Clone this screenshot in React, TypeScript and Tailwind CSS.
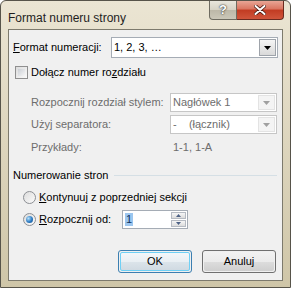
import React from 'react';

const font = { fontFamily: '"Liberation Sans", Arial, sans-serif' };

function Arrow({ disabled }: { disabled?: boolean }) {
  return (
    <svg width="7" height="4" viewBox="0 0 7 4">
      <path d="M0 0h7L3.5 4z" fill={disabled ? '#a0a0a0' : '#000'} />
    </svg>
  );
}

function Select({
  value,
  width,
  height,
  disabled,
}: {
  value: string;
  width: string;
  height: string;
  disabled?: boolean;
}) {
  return (
    <div
      className={`${width} ${height} flex items-stretch border ${
        disabled ? 'border-[#c6c6c6] text-[#6d6d6d]' : 'border-[#a5acb5] text-black'
      } bg-white`}
    >
      <div className="flex-1 flex items-center pl-[2px] whitespace-pre">{value}</div>
      <div
        className={`w-[17px] m-[1px] flex items-center justify-center border ${
          disabled
            ? 'border-[#e3e3e3] bg-[#f4f4f4]'
            : 'border-[#9ea3aa] bg-gradient-to-b from-[#f5f5f5] to-[#d9d9d9]'
        }`}
      >
        <Arrow disabled={disabled} />
      </div>
    </div>
  );
}

function Radio({ checked }: { checked?: boolean }) {
  return (
    <div className="w-[13px] h-[13px] rounded-full border border-[#8c8f94] bg-gradient-to-br from-[#dcdcdc] to-[#fbfbfb] flex items-center justify-center">
      {checked && (
        <div className="w-[7px] h-[7px] rounded-full bg-[radial-gradient(circle_at_35%_35%,#b7e2fb,#2b7ac2_55%,#134c8a)]" />
      )}
    </div>
  );
}

function Button({ label, primary }: { label: string; primary?: boolean }) {
  return (
    <div
      className={`w-[74px] h-[23px] rounded-[3px] border ${
        primary ? 'border-[#3c7fb1]' : 'border-[#707070]'
      } p-[1px]`}
    >
      <div
        className={`w-full h-full rounded-[2px] flex items-center justify-center ${
          primary
            ? 'border border-[#6fd0f5] bg-[linear-gradient(#f3f7fa_0%,#e9eff3_50%,#dce4ea_51%,#d0dae2_100%)]'
            : 'bg-[linear-gradient(#f2f2f2_0%,#ebebeb_50%,#dddddd_51%,#cfcfcf_100%)]'
        }`}
      >
        {label}
      </div>
    </div>
  );
}

export default function App() {
  return (
    <div className="w-[291px] h-[288px] text-[11px] text-black" style={font}>
      <div className="w-full h-full flex flex-col rounded-t-[6px] border border-[#57544a] bg-gradient-to-b from-[#ebe5d3] via-[#ddd5bd] to-[#cfc6a8]">
        {/* Title bar */}
        <div className="h-[28px] flex items-start">
          <div className="pl-[7px] pt-[8px] text-[12px] text-[#1e1e1e] flex-1">Format numeru strony</div>
          <div className="flex mr-[6px]">
            <div className="w-[28px] h-[19px] rounded-bl-[4px] border border-t-0 border-[#6e6b60] bg-[linear-gradient(#e9e6dc_0%,#d6d2c4_50%,#bdb8a8_51%,#cbc7b8_100%)] flex items-center justify-center text-white font-bold text-[13px] [text-shadow:0_0_2px_#333,0_0_1px_#333]">
              ?
            </div>
            <div className="w-[47px] h-[19px] rounded-br-[4px] border border-t-0 border-l-0 border-[#6b2a1f] bg-[linear-gradient(#e8a595_0%,#d9745f_45%,#c23b22_50%,#d0553b_100%)] flex items-center justify-center">
              <svg width="12" height="10" viewBox="0 0 12 10">
                <path d="M1.5 1l9 8M10.5 1l-9 8" stroke="#4a1a10" strokeWidth="3.6" strokeLinecap="round" />
                <path d="M1.5 1l9 8M10.5 1l-9 8" stroke="#fff" strokeWidth="2" strokeLinecap="round" />
              </svg>
            </div>
          </div>
        </div>

        {/* Client */}
        <div className="flex-1 mx-[7px] mb-[6px] border border-[#7d7a6d] bg-[#f0f0f0] px-[4px] flex flex-col">
          <div className="mt-[7px] h-[21px] flex items-center justify-between">
            <span>
              <u>F</u>ormat numeracji:
            </span>
            <Select value="1, 2, 3, …" width="w-[167px]" height="h-[21px]" />
          </div>

          <div className="mt-[6px] h-[17px] flex items-center pl-[2px] gap-[3px]">
            <div className="w-[13px] h-[13px] border border-[#8f8f8f] bg-gradient-to-br from-[#dcdcdc] to-[#fafafa] p-[2px]">
              <div className="w-full h-full bg-gradient-to-br from-[#cbcfd5] to-[#f6f6f6]" />
            </div>
            <span>
              Dołącz numer ro<u>z</u>działu
            </span>
          </div>

          <div className="pl-[18px] text-[#6d6d6d] grid grid-cols-[139px_107px]">
            <div className="mt-[12px] h-[19px] flex items-center">Rozpocznij rozdział stylem:</div>
            <div className="mt-[12px]">
              <Select value="Nagłówek 1" width="w-[107px]" height="h-[19px]" disabled />
            </div>
            <div className="mt-[3px] h-[19px] flex items-center">Użyj separatora:</div>
            <div className="mt-[3px]">
              <Select value="-    (łącznik)" width="w-[107px]" height="h-[19px]" disabled />
            </div>
            <div className="mt-[5px] h-[16px] flex items-center">Przykłady:</div>
            <div className="mt-[5px] h-[16px] flex items-center pl-[3px]">1-1, 1-A</div>
          </div>

          <div className="mt-[13px] h-[14px] flex items-center gap-[6px]">
            <span>Numerowanie stron</span>
            <div className="flex-1 h-px bg-[#d5dfe5] mr-[1px]" />
          </div>

          <div className="mt-[7px] h-[16px] flex items-center pl-[10px] gap-[3px]">
            <Radio />
            <span>
              <u>K</u>ontynuuj z poprzedniej sekcji
            </span>
          </div>

          <div className="mt-[5px] h-[19px] flex items-center pl-[10px]">
            <Radio checked />
            <span className="ml-[3px] w-[83px]">
              <u>R</u>ozpocznij od:
            </span>
            <div className="w-[66px] h-[19px] border border-[#a5acb5] bg-white flex items-stretch">
              <div className="flex-1 flex items-center pl-[2px]">
                <span className="bg-[#9cc6ef] text-[#10305e] px-[1px] leading-[13px]">1</span>
              </div>
              <div className="w-[15px] flex flex-col m-[1px] gap-px">
                <div className="flex-1 border border-[#b5bac2] bg-gradient-to-b from-[#f6f6f6] to-[#dcdcdc] flex items-center justify-center">
                  <svg width="5" height="3" viewBox="0 0 5 3">
                    <path d="M0 3h5L2.5 0z" fill="#4d6185" />
                  </svg>
                </div>
                <div className="flex-1 border border-[#b5bac2] bg-gradient-to-b from-[#f6f6f6] to-[#dcdcdc] flex items-center justify-center">
                  <svg width="5" height="3" viewBox="0 0 5 3">
                    <path d="M0 0h5L2.5 3z" fill="#4d6185" />
                  </svg>
                </div>
              </div>
            </div>
          </div>

          <div className="mt-[21px] flex justify-end gap-[10px] pr-[2px]">
            <Button label="OK" primary />
            <Button label="Anuluj" />
          </div>
        </div>
      </div>
    </div>
  );
}
